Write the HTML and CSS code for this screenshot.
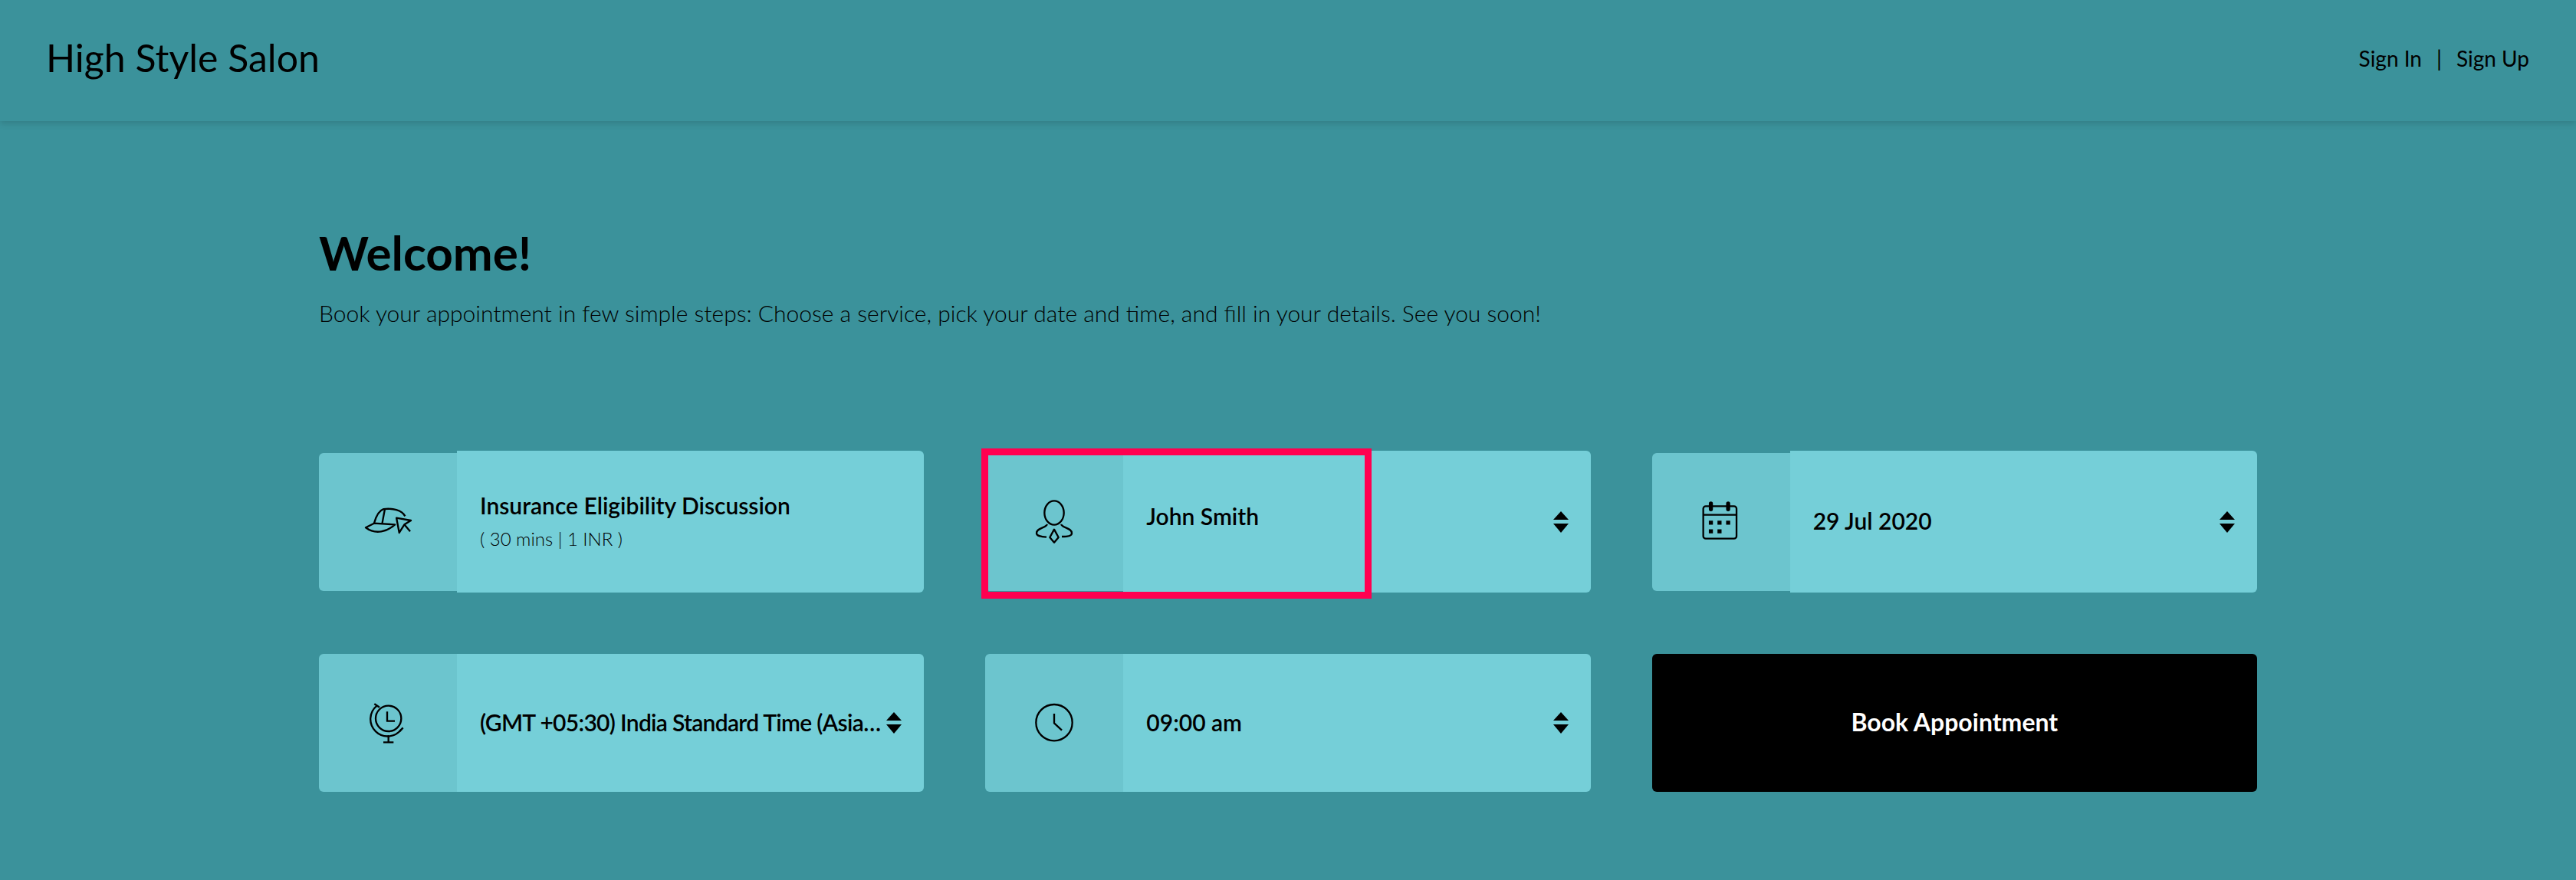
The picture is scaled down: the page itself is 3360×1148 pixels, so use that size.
FILE: index.html
```html
<!DOCTYPE html>
<html lang="en">
  <head>
    <meta charset="UTF-8" />
    <meta name="viewport" content="width=device-width, initial-scale=1.0" />
    <title>High Style Salon</title>
    <link rel="stylesheet" href="styles.css">
  </head>
  <body>
    <!-- header -->
    <header class="topbar">
      <div class="brand">High Style Salon</div>
      <nav class="auth-links">
        <a href="#">Sign In</a>
        <span class="auth-sep">|</span>
        <a href="#">Sign Up</a>
      </nav>
    </header>

    <main class="page">
      <h1 class="welcome-title">Welcome!</h1>
      <p class="welcome-text">Book your appointment in few simple steps: Choose a service, pick your date and time, and fill in your details. See you soon!</p>

      <div class="booking-grid">
        <!-- service -->
        <div class="field">
          <div class="field-icon">
            <svg class="icon" viewBox="74 63 190 120" width="63" height="40">
              <path d="M80 145 L113 128 L195 133 C165 160 120 175 80 145 Z" />
              <path d="M113 128 C122 95 132 78 150 72 C185 68 222 75 235 100" />
              <path d="M145 128 L155 74" />
              <path d="M201 107 L258 117 L232 133 L212 165 Z" />
              <path d="M232 133 L255 160" />
            </svg>
          </div>
          <div class="field-value">
            <div class="value-text">
              <div class="value-main">Insurance Eligibility Discussion</div>
              <div class="value-sub">( 30 mins | 1 INR )</div>
            </div>
          </div>
        </div>

        <!-- staff, focused -->
        <div class="field">
          <div class="field-icon">
            <svg class="icon" viewBox="45 33 180 180" width="60" height="60">
              <ellipse cx="135" cy="87" rx="38" ry="47" />
              <path d="M108 132 C100 148 66 146 66 167 C66 178 85 180 105 182" />
              <path d="M162 132 C170 148 204 146 204 167 C204 178 185 180 165 180" />
              <path d="M135 152 L152 183 L135 203 L118 183 Z" />
            </svg>
          </div>
          <div class="field-value">
            <div class="value-text value-raised">
              <div class="value-main">John Smith</div>
            </div>
            <span class="sort-arrows"><i class="arrow-up"></i><i class="arrow-down"></i></span>
          </div>
          <div class="focus-box"></div>
        </div>

        <!-- date -->
        <div class="field">
          <div class="field-icon">
            <svg class="icon" viewBox="85 43 160 160" width="53" height="53">
              <rect x="96" y="62" width="131" height="128" rx="10" />
              <path d="M96 96 H227" />
              <path class="icon-peg" d="M126 52 V74 M194 52 V74" />
              <path class="icon-dot" d="M126 119 V135 M160 119 V135 M194 119 V135 M126 153 V169 M160 153 V169" />
            </svg>
          </div>
          <div class="field-value">
            <div class="value-text">
              <div class="value-main">29 Jul 2020</div>
            </div>
            <span class="sort-arrows"><i class="arrow-up"></i><i class="arrow-down"></i></span>
          </div>
        </div>

        <!-- timezone -->
        <div class="field">
          <div class="field-icon">
            <svg class="icon" viewBox="48 39 180 180" width="60" height="60">
              <circle cx="140" cy="112" r="50" />
              <path d="M135 85 V122 H165" />
              <path d="M95 62 A67 67 0 1 0 190 155" />
              <path d="M85 55 L105 68 M183 163 L197 148" />
              <path d="M140 178 V205 M120 205 H160" />
            </svg>
          </div>
          <div class="field-value">
            <div class="value-text">
              <div class="value-main value-tight">(GMT +05:30) India Standard Time (Asia/Kolkata)</div>
            </div>
            <span class="sort-arrows"><i class="arrow-up"></i><i class="arrow-down"></i></span>
          </div>
        </div>

        <!-- time -->
        <div class="field">
          <div class="field-icon">
            <svg class="icon" viewBox="45 39 180 180" width="60" height="60">
              <circle cx="135" cy="128" r="71" />
              <path d="M135 93 V130 L165 158" />
            </svg>
          </div>
          <div class="field-value">
            <div class="value-text">
              <div class="value-main">09:00 am</div>
            </div>
            <span class="sort-arrows"><i class="arrow-up"></i><i class="arrow-down"></i></span>
          </div>
        </div>

        <button class="book-button">Book Appointment</button>
      </div>
    </main>
  </body>
</html>
```

FILE: styles.css
```css
:root {
  --page-bg: #3b929b;
  --panel: #75cfd8;
  --panel-dark: #6cc5ce;
  --focus: #ff0050;
}

* {
  margin: 0;
  padding: 0;
  box-sizing: border-box;
}

body {
  background-color: var(--page-bg);
  color: #000;
  font-family: Lato, "Open Sans", sans-serif;
  overflow: hidden;
}

/* header */
.topbar {
  display: flex;
  justify-content: space-between;
  align-items: center;
  height: 158px;
  padding: 0 61px 6px 60px;
  box-shadow: 0 3px 8px rgba(0, 0, 0, 0.14);
}

.brand {
  font-size: 50px;
  margin-bottom: 2px;
}

.auth-links {
  display: flex;
  align-items: center;
  gap: 19px;
  font-size: 28px;
}

.auth-links a {
  color: #000;
  text-decoration: none;
}

/* intro */
.page {
  padding: 131px 416px 0;
}

.welcome-title {
  font-size: 62px;
  font-weight: 700;
  line-height: 80px;
}

.welcome-text {
  margin-top: 19px;
  font-size: 30px;
  font-weight: 300;
  line-height: 40px;
}

/* booking fields */
.booking-grid {
  display: grid;
  grid-template-columns: repeat(3, minmax(0, 1fr));
  grid-template-rows: 185px 180px;
  gap: 80px;
  margin-top: 160px;
}

.field {
  position: relative;
  display: flex;
  align-items: center;
}

.field-icon {
  display: flex;
  justify-content: center;
  align-items: center;
  flex: none;
  width: 180px;
  height: 180px;
  background: var(--panel-dark);
  border-radius: 6px 0 0 6px;
}

.icon {
  fill: none;
  stroke: #000;
  stroke-width: 7;
  stroke-linejoin: round;
}

.icon-peg {
  stroke-width: 16;
  stroke-linecap: round;
}

.icon-dot {
  stroke-width: 16;
}

.field-value {
  display: flex;
  align-items: center;
  flex: 1;
  min-width: 0;
  align-self: stretch;
  gap: 4px;
  padding: 0 29px 3px 30px;
  background: var(--panel);
  border-radius: 0 6px 6px 0;
}

.value-text {
  flex: 1;
  min-width: 0;
}

.value-raised {
  margin-bottom: 12px;
}

.value-main {
  font-size: 30px;
  font-weight: 600;
  line-height: 40px;
  white-space: nowrap;
  overflow: hidden;
  text-overflow: ellipsis;
}

.value-tight {
  letter-spacing: -0.7px;
}

.value-sub {
  margin-top: 8px;
  font-size: 24px;
  font-weight: 300;
  line-height: 32px;
}

.sort-arrows {
  display: flex;
  flex-direction: column;
  gap: 5px;
  flex: none;
  margin-top: 3px;
}

.arrow-up,
.arrow-down {
  display: block;
  border-left: 10px solid transparent;
  border-right: 10px solid transparent;
}

.arrow-up {
  border-bottom: 11px solid #000;
}

.arrow-down {
  border-top: 12px solid #000;
}

.book-button {
  background: #000;
  color: #fff;
  border: none;
  border-radius: 6px;
  padding-bottom: 4px;
  font-family: inherit;
  font-size: 32px;
  font-weight: 700;
}

/* red outline drawn over the staff field */
.focus-box {
  position: absolute;
  left: -5px;
  top: -3px;
  width: 509px;
  height: 196px;
  border: 9px solid var(--focus);
}
```
